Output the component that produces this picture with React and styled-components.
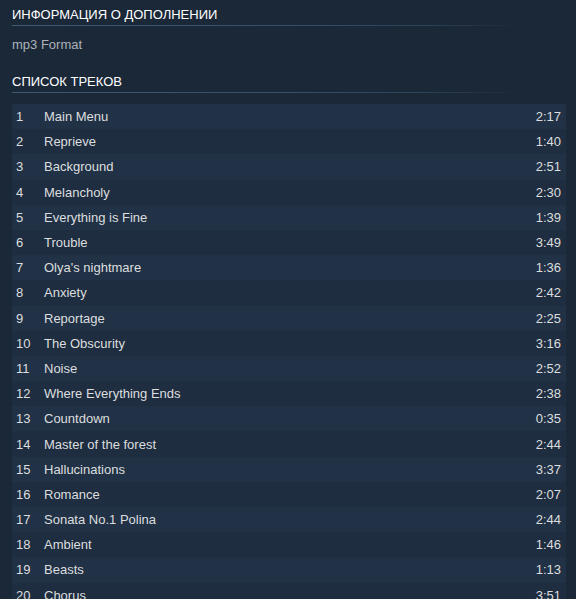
import styled, { createGlobalStyle } from "styled-components"

const tracks = [
  ["Main Menu", "2:17"],
  ["Reprieve", "1:40"],
  ["Background", "2:51"],
  ["Melancholy", "2:30"],
  ["Everything is Fine", "1:39"],
  ["Trouble", "3:49"],
  ["Olya's nightmare", "1:36"],
  ["Anxiety", "2:42"],
  ["Reportage", "2:25"],
  ["The Obscurity", "3:16"],
  ["Noise", "2:52"],
  ["Where Everything Ends", "2:38"],
  ["Countdown", "0:35"],
  ["Master of the forest", "2:44"],
  ["Hallucinations", "3:37"],
  ["Romance", "2:07"],
  ["Sonata No.1 Polina", "2:44"],
  ["Ambient", "1:46"],
  ["Beasts", "1:13"],
  ["Chorus", "3:51"],
]

export default function App() {
  return (
    <>
      <GlobalStyle />
      <StyledPage>
        <StyledHeading>Информация о дополнении</StyledHeading>
        <StyledInfo>mp3 Format</StyledInfo>
        <StyledHeading>Список треков</StyledHeading>
        <StyledTable>
          {tracks.map(([title, time], i) => (
            <StyledRow key={i} $odd={i % 2 === 0}>
              <span className="num">{i + 1}</span>
              <span className="title">{title}</span>
              <span className="time">{time}</span>
            </StyledRow>
          ))}
        </StyledTable>
      </StyledPage>
    </>
  )
}

const GlobalStyle = createGlobalStyle`
  body {
    margin: 0;
    background-color: #1b2838;
    font-family: "Liberation Sans", Arial, sans-serif;
  }
`

const StyledPage = styled.div`
  padding: 6px 10px 0 12px;
`

const StyledHeading = styled.h2`
  margin: 0;
  padding-bottom: 3px;
  font-size: 13px;
  font-weight: 400;
  line-height: 17px;
  color: #fff;
  text-transform: uppercase;
  background-image: linear-gradient(to right, #3e5a70 0%, #34506a 50%, #2c4258 75%, rgba(44, 66, 88, 0) 92%);
  background-size: 100% 1px;
  background-repeat: no-repeat;
  background-position: bottom left;
`

const StyledInfo = styled.div`
  padding: 11px 0 20px;
  font-size: 13px;
  line-height: 16px;
  color: #acb2b8;
`

const StyledTable = styled.div`
  margin-top: 11px;
  display: flex;
  flex-direction: column;
`

const StyledRow = styled.div`
  height: 25.2px;
  display: grid;
  grid-template-columns: 28px 1fr auto;
  align-items: center;
  padding: 0 5px 0 4px;
  font-size: 13px;
  color: #dcdedf;
  background-color: ${({ $odd }) => ($odd ? "#213246" : "#1e2d3f")};

  .time {
    text-align: right;
  }
`
